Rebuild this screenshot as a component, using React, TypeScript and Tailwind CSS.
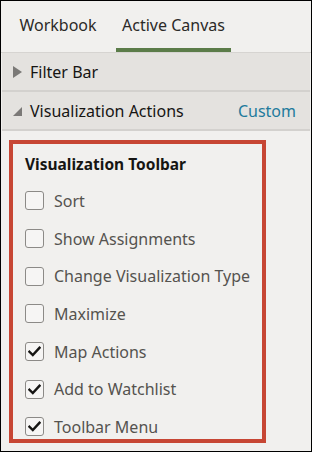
import React from 'react';

type Option = {label: string; checked: boolean};

const options: Option[] = [
    {label: 'Sort', checked: false},
    {label: 'Show Assignments', checked: false},
    {label: 'Change Visualization Type', checked: false},
    {label: 'Maximize', checked: false},
    {label: 'Map Actions', checked: true},
    {label: 'Add to Watchlist', checked: true},
    {label: 'Toolbar Menu', checked: true}
];

const CheckBox: React.FC<{checked: boolean}> = ({checked}) => (
    <span className="flex h-[19px] w-[19px] shrink-0 items-center justify-center rounded-[3px] border-[1.5px] border-[#8c8a87] bg-[#f6f5f4]">
        {checked && (
            <svg width="13" height="11" viewBox="0 0 13 11" fill="none">
                <path d="M1.5 5.8 L4.8 9 L11.5 1.8" stroke="#161513" strokeWidth="2.4" strokeLinecap="square"/>
            </svg>
        )}
    </span>
);

const App: React.FC = () => {
    return (
        <div
            className="flex h-[452px] w-[312px] flex-col border border-black bg-[#f1f0ee] text-[#161513]"
            style={{fontFamily: '"Noto Sans", "Open Sans", sans-serif'}}
        >
            {/* tabs */}
            <div className="flex h-[52px] items-end border-b border-[#d6d4d1] pl-[7px]">
                <div className="flex h-full w-[100px] items-center justify-center pb-[4px] text-[16px] text-[#2b2a28]">
                    Workbook
                </div>
                <div className="ml-[8px] flex h-full w-[115px] items-center justify-center border-b-[4px] border-[#5b7c49] text-[16px] text-[#2b2a28]">
                    Active Canvas
                </div>
            </div>

            {/* sections */}
            <div className="mx-px flex h-[39px] items-center border-b-2 border-[#d3d1ce] bg-[#e4e2df] pl-[11px]">
                <svg width="9" height="12" viewBox="0 0 9 12" className="shrink-0">
                    <path d="M0 0 L9 6 L0 12 Z" fill="#7b7977"/>
                </svg>
                <span className="ml-[8px] text-[16px]">Filter Bar</span>
            </div>
            <div className="mx-px flex h-[39px] items-center border-b-2 border-[#d3d1ce] bg-[#e4e2df] pl-[11px] pr-[14px]">
                <svg width="9" height="9" viewBox="0 0 9 9" className="mt-[1px] shrink-0">
                    <path d="M9 0 L9 9 L0 9 Z" fill="#7b7977"/>
                </svg>
                <span className="ml-[8px] text-[16px]">Visualization Actions</span>
                <span className="ml-auto text-[16px] text-[#227a9c]">Custom</span>
            </div>

            {/* toolbar options */}
            <div className="ml-[8px] mt-[9px] h-[303px] w-[257px] border-[4px] border-[#c74634] pl-[12px] pt-[8px]">
                <div className="whitespace-nowrap text-[15.5px] font-bold leading-[24px]">Visualization Toolbar</div>
                <div className="mt-[6px] flex flex-col">
                    {options.map(o => (
                        <label key={o.label} className="flex h-[37.7px] items-center whitespace-nowrap">
                            <CheckBox checked={o.checked}/>
                            <span className="ml-[10px] text-[16px] text-[#55534f]">{o.label}</span>
                        </label>
                    ))}
                </div>
            </div>
        </div>
    );
};

export default App;
